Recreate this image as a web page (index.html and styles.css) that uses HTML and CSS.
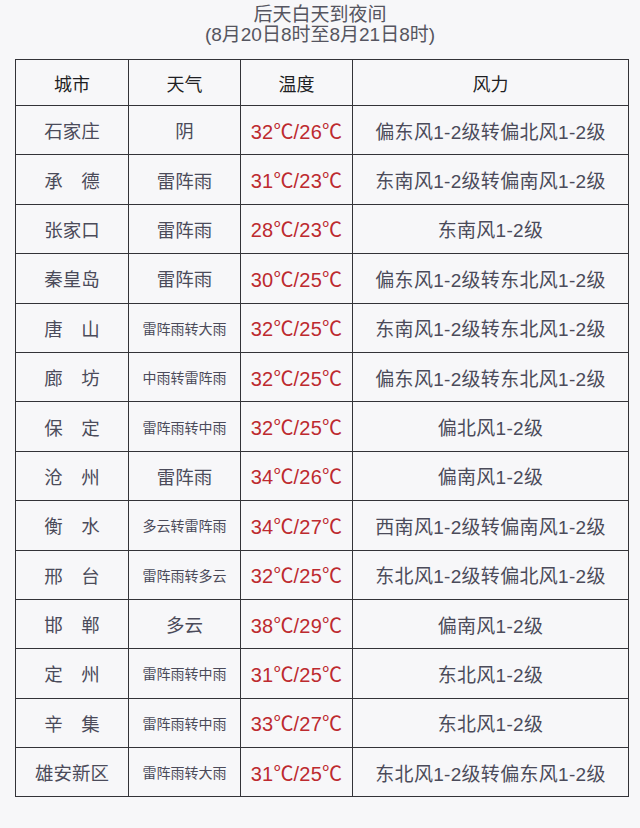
FILE: index.html
```html
<!DOCTYPE html>
<html lang="zh">
<head>
<meta charset="utf-8">
<link rel="stylesheet" href="styles.css">
</head>
<body>
<div class="page">
  <div class="title">
    <div>后天白天到夜间</div>
    <div>(8月20日8时至8月21日8时)</div>
  </div>
  <table class="wx">
    <colgroup>
      <col class="c1"><col class="c2"><col class="c3"><col class="c4">
    </colgroup>
    <thead>
      <tr><th>城市</th><th>天气</th><th>温度</th><th>风力</th></tr>
    </thead>
    <tbody>
      <tr><td>石家庄</td><td>阴</td><td class="t">32℃/26℃</td><td class="w">偏东风1-2级转偏北风1-2级</td></tr>
      <tr><td>承　德</td><td>雷阵雨</td><td class="t">31℃/23℃</td><td class="w">东南风1-2级转偏南风1-2级</td></tr>
      <tr><td>张家口</td><td>雷阵雨</td><td class="t">28℃/23℃</td><td class="w">东南风1-2级</td></tr>
      <tr><td>秦皇岛</td><td>雷阵雨</td><td class="t">30℃/25℃</td><td class="w">偏东风1-2级转东北风1-2级</td></tr>
      <tr><td>唐　山</td><td class="s">雷阵雨转大雨</td><td class="t">32℃/25℃</td><td class="w">东南风1-2级转东北风1-2级</td></tr>
      <tr><td>廊　坊</td><td class="s">中雨转雷阵雨</td><td class="t">32℃/25℃</td><td class="w">偏东风1-2级转东北风1-2级</td></tr>
      <tr><td>保　定</td><td class="s">雷阵雨转中雨</td><td class="t">32℃/25℃</td><td class="w">偏北风1-2级</td></tr>
      <tr><td>沧　州</td><td>雷阵雨</td><td class="t">34℃/26℃</td><td class="w">偏南风1-2级</td></tr>
      <tr><td>衡　水</td><td class="s">多云转雷阵雨</td><td class="t">34℃/27℃</td><td class="w">西南风1-2级转偏南风1-2级</td></tr>
      <tr><td>邢　台</td><td class="s">雷阵雨转多云</td><td class="t">32℃/25℃</td><td class="w">东北风1-2级转偏北风1-2级</td></tr>
      <tr><td>邯　郸</td><td>多云</td><td class="t">38℃/29℃</td><td class="w">偏南风1-2级</td></tr>
      <tr><td>定　州</td><td class="s">雷阵雨转中雨</td><td class="t">31℃/25℃</td><td class="w">东北风1-2级</td></tr>
      <tr><td>辛　集</td><td class="s">雷阵雨转中雨</td><td class="t">33℃/27℃</td><td class="w">东北风1-2级</td></tr>
      <tr><td>雄安新区</td><td class="s">雷阵雨转大雨</td><td class="t">31℃/25℃</td><td class="w">东北风1-2级转偏东风1-2级</td></tr>
    </tbody>
  </table>
</div>
</body>
</html>
```

FILE: styles.css
```css
html, body {
  margin: 0;
  padding: 0;
  background: #f7f7f9;
}
body {
  width: 640px;
  height: 828px;
  overflow: hidden;
  font-family: "Liberation Sans", "Noto Sans CJK SC", sans-serif;
  color: #4b4b5a;
}
.page {
  padding: 5px 12px 0 15px;
}
.title {
  text-align: center;
  font-size: 19px;
  line-height: 20px;
  color: #555560;
  margin-left: -15px;
  margin-right: -12px;
  height: 54px;
}
.wx {
  border-collapse: collapse;
  width: 613px;
  table-layout: fixed;
}
.c1 { width: 113px; }
.c2 { width: 112px; }
.c3 { width: 112px; }
.c4 { width: 276px; }
.wx th, .wx td {
  border: 1px solid #333338;
  text-align: center;
  padding: 0;
  white-space: nowrap;
  font-weight: normal;
}
.wx th {
  height: 45px;
  font-size: 18px;
  color: #1f1f24;
}
.wx td {
  height: 48.4px;
  font-size: 18.5px;
}
.wx td.s {
  font-size: 14px;
}
.wx td.w {
  font-size: 19px;
  letter-spacing: 0.3px;
}
.wx td.t {
  color: #bd2a2f;
  font-size: 20px;
  letter-spacing: 0.2px;
}
```
